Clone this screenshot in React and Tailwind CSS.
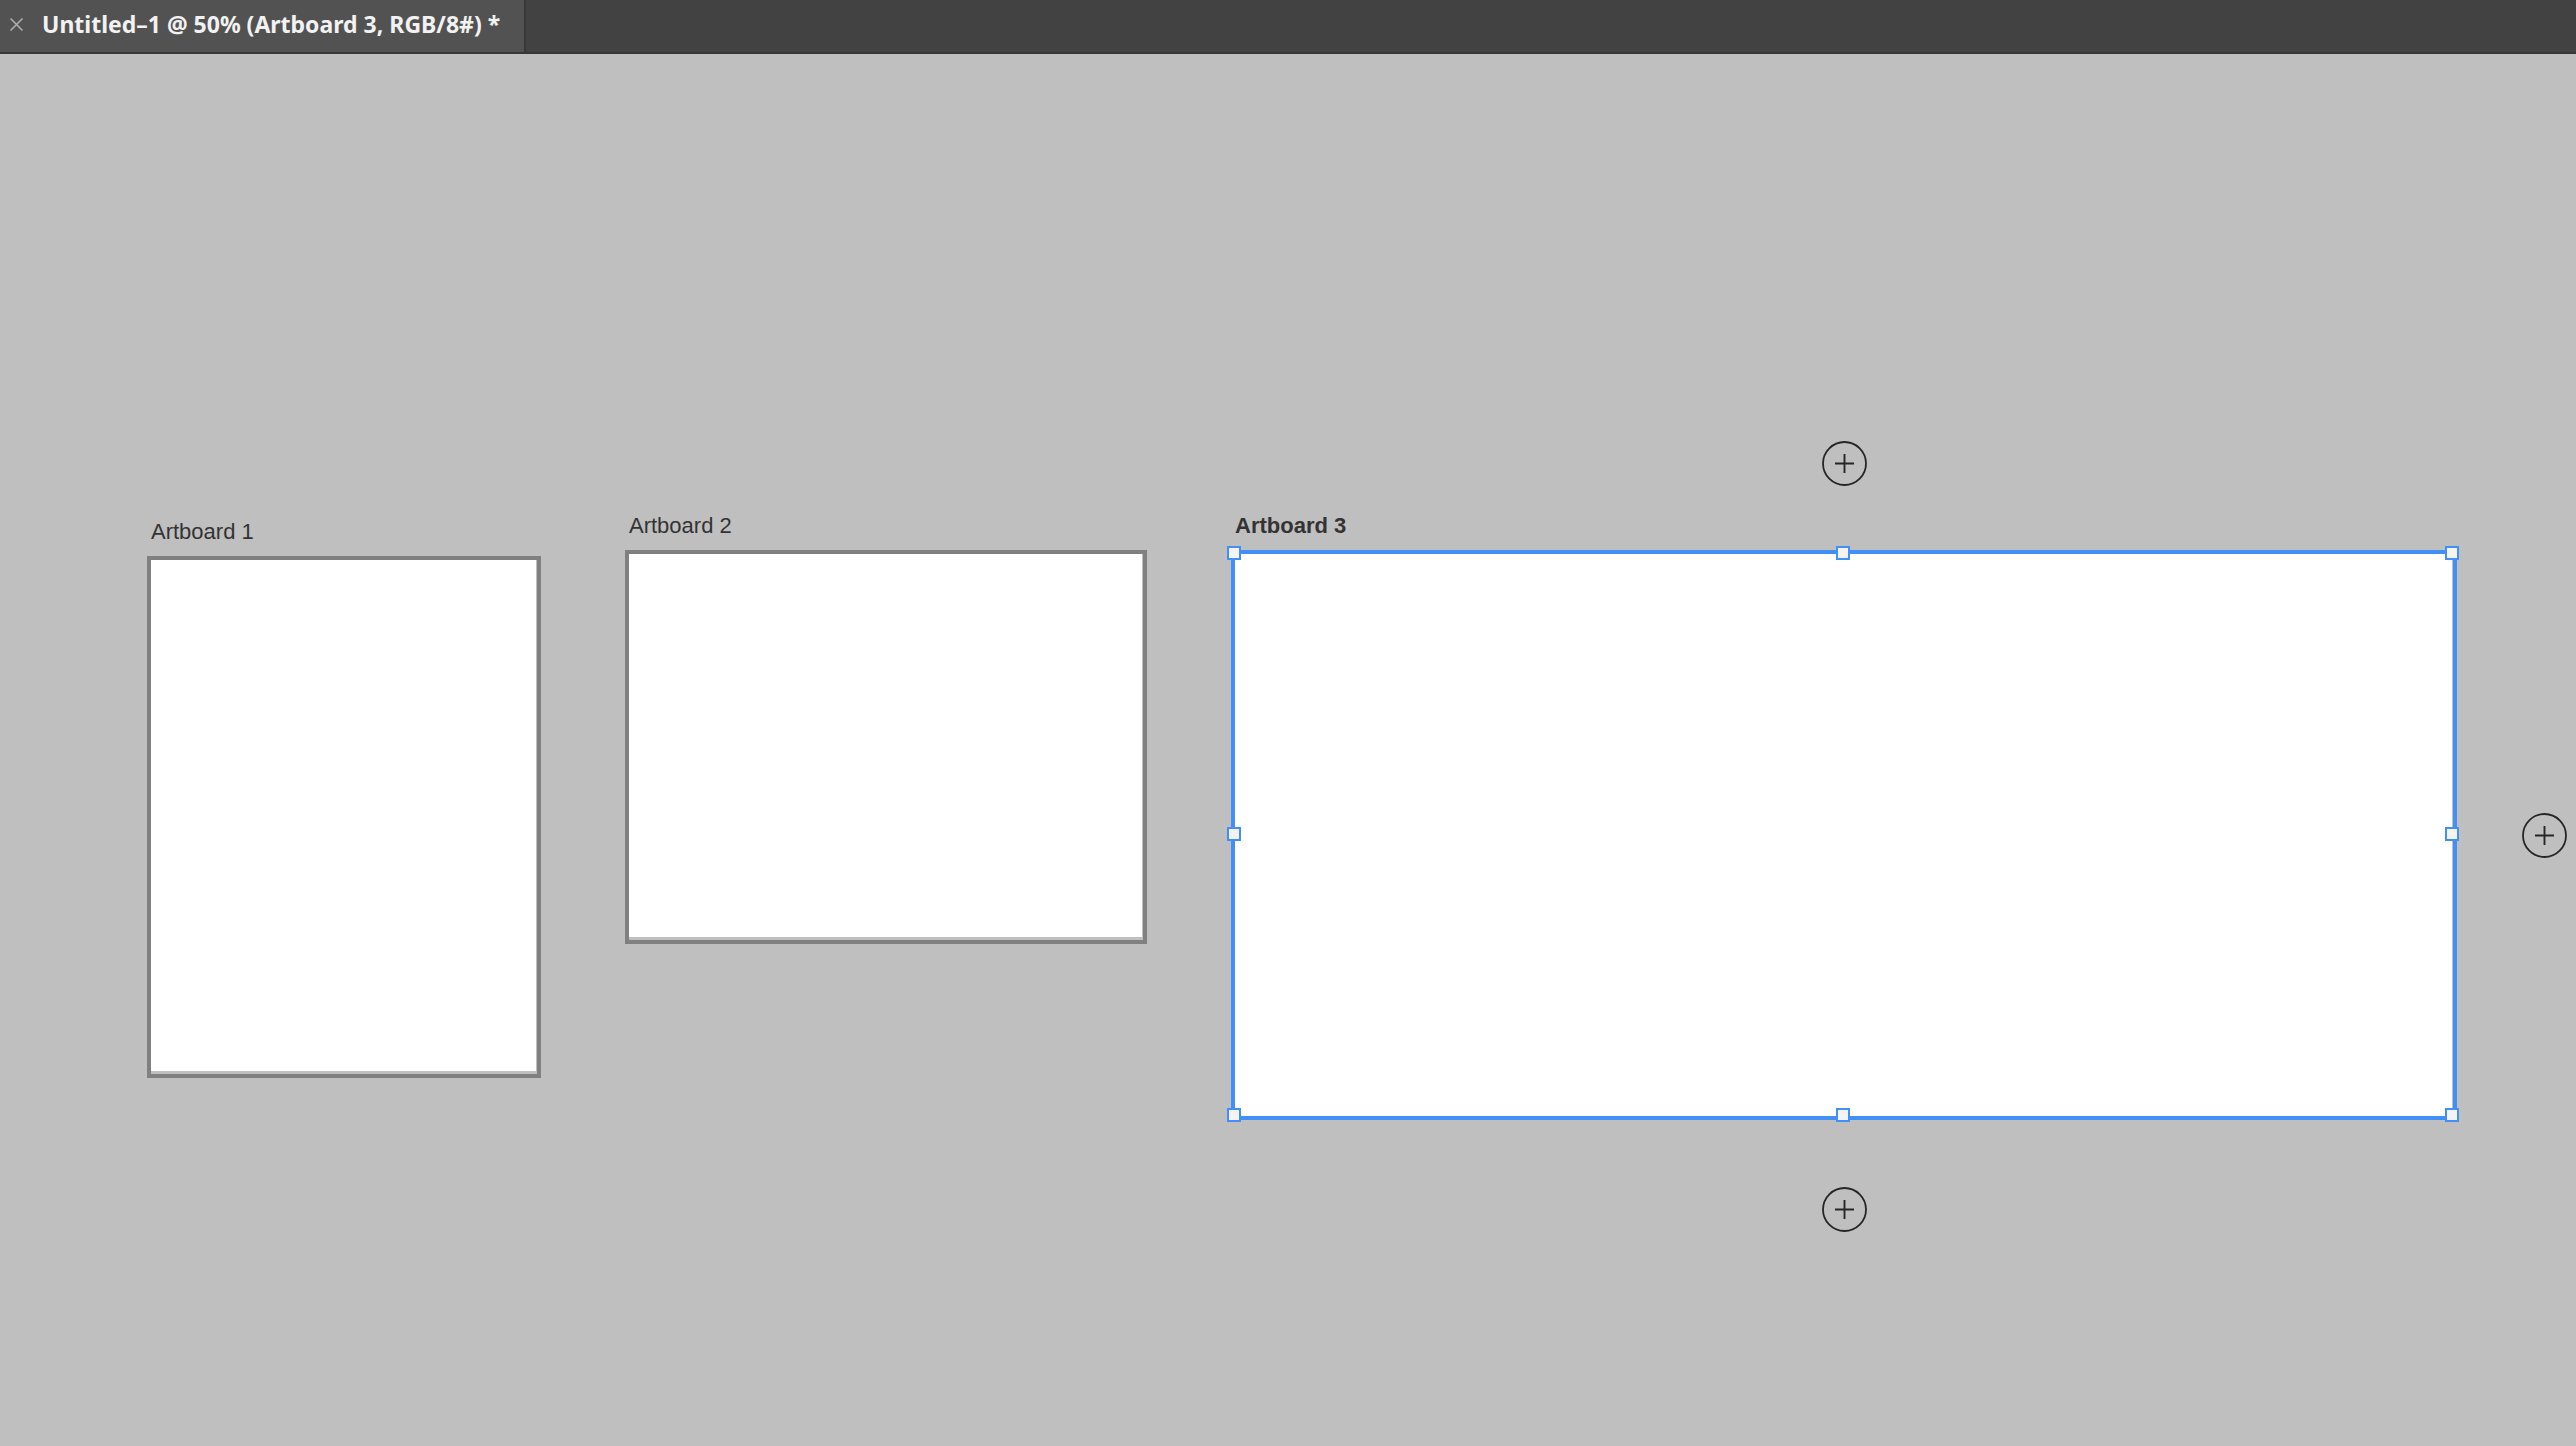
const artboards = [
  { name: "Artboard 1", x: 147, y: 462, width: 394, height: 522 },
  { name: "Artboard 2", x: 625, y: 456, width: 522, height: 394 },
  { name: "Artboard 3", x: 1231, y: 456, width: 1226, height: 570, selected: true },
];

const handles = [
  { label: "Resize top left", position: "left-0 top-0" },
  { label: "Resize top", position: "left-1/2 top-0" },
  { label: "Resize top right", position: "left-full top-0" },
  { label: "Resize left", position: "left-0 top-1/2" },
  { label: "Resize right", position: "left-full top-1/2" },
  { label: "Resize bottom left", position: "left-0 top-full" },
  { label: "Resize bottom", position: "left-1/2 top-full" },
  { label: "Resize bottom right", position: "left-full top-full" },
];

const addButtons = [
  { label: "Add artboard above", position: "left-1/2 -ml-[22px] -top-[113px]" },
  { label: "Add artboard to the right", position: "left-full ml-[69px] top-1/2 -mt-[22px]" },
  { label: "Add artboard below", position: "left-1/2 -ml-[22px] top-full mt-[71px]" },
];

function AddButton({ label, position }) {
  return (
    <button type="button" aria-label={label} className={`absolute size-[45px] ${position}`}>
      <svg viewBox="0 0 45 45" fill="none" stroke="#262626" className="size-full">
        <circle cx="22.5" cy="22.5" r="21.5" strokeWidth="1.8" />
        <path d="M22.5 13v19M13 22.5h19" strokeWidth="1.9" />
      </svg>
    </button>
  );
}

function Artboard({ name, x, y, width, height, selected }) {
  return (
    <section className="absolute" style={{ left: x, top: y, width }}>
      <h2
        className={`h-10 pl-1 text-[22px] leading-8 whitespace-nowrap text-[#333333] ${
          selected ? "font-bold" : "font-normal"
        }`}
      >
        {name}
      </h2>
      <div
        className={`relative border-4 bg-[#bfbfbf] ${
          selected ? "border-[#4290f7] pr-px" : "border-[#808080] pr-px pb-[3px]"
        }`}
        style={{ height }}
      >
        <div className="h-full bg-white" />
        {selected && (
          <>
            {handles.map((handle) => (
              <button
                key={handle.label}
                type="button"
                aria-label={handle.label}
                className={`absolute -mt-2 -ml-2 size-[14px] border-2 border-[#4290f7] bg-[#f3f3f3] ${handle.position}`}
              />
            ))}
            {addButtons.map((button) => (
              <AddButton key={button.label} {...button} />
            ))}
          </>
        )}
      </div>
    </section>
  );
}

function App() {
  return (
    <div className="flex min-h-screen flex-col bg-[#bfbfbf] font-['Liberation_Sans',sans-serif]">
      {/* Document tabs */}
      <header className="flex h-[54px] shrink-0 border-b-2 border-[#383838] bg-[#424242]">
        <div className="flex items-center gap-[19px] border-r-2 border-[#383838] bg-[#525252] pr-6 pb-1 pl-[10px]">
          <button type="button" aria-label="Close document">
            <svg viewBox="0 0 13 13" stroke="#b0b0b0" strokeWidth="1.5" className="size-[13px]">
              <path d="M0.5 0.5l12 12M12.5 0.5l-12 12" />
            </svg>
          </button>
          <h1 className="pb-px font-['Noto_Sans',sans-serif] text-[23px] leading-8 font-bold whitespace-nowrap text-[#f2f2f2]">
            Untitled–1 @ 50% (Artboard 3, RGB/8#) *
          </h1>
        </div>
      </header>

      {/* Canvas */}
      <main className="relative flex-1 overflow-hidden">
        {artboards.map((artboard) => (
          <Artboard key={artboard.name} {...artboard} />
        ))}
      </main>
    </div>
  );
}

export default App;
